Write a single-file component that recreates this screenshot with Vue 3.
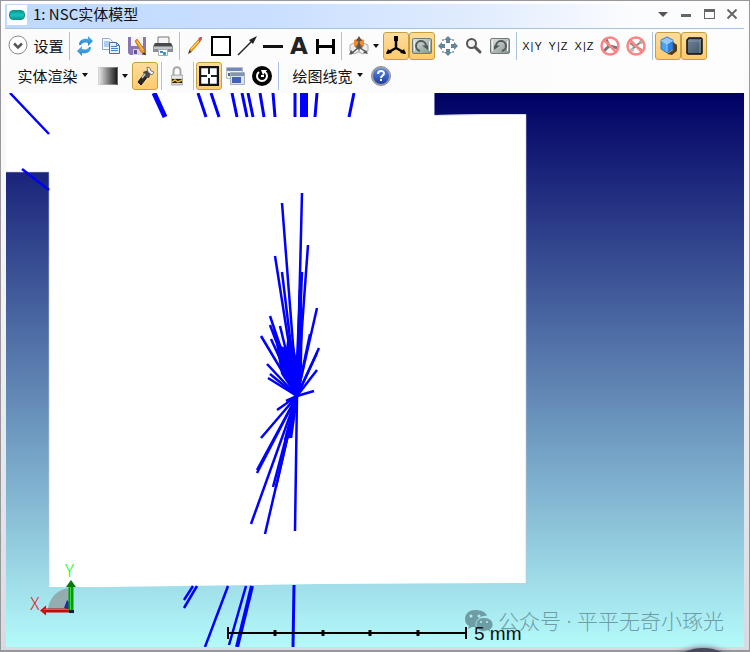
<script setup>
const fileTools = [
  { icon: 'refresh', label: 'Refresh' },
  { icon: 'copy', label: 'Copy' },
  { icon: 'save', label: 'Save' },
  { icon: 'print', label: 'Print' },
]
const drawTools = [
  { icon: 'pencil', label: 'Pencil' },
  { icon: 'rectangle', label: 'Rectangle' },
  { icon: 'arrow', label: 'Arrow' },
  { icon: 'line', label: 'Line' },
  { text: 'A', label: 'Text' },
  { icon: 'measure', label: 'Measure' },
]
const viewTools = [
  { icon: 'triad', label: 'Axes', active: true },
  { icon: 'rotate', label: 'Rotate', active: true },
  { icon: 'move', label: 'Pan' },
  { icon: 'zoom', label: 'Zoom' },
  { icon: 'reset', label: 'Reset view' },
]
const planeTools = [
  ['X', 'Y'],
  ['Y', 'Z'],
  ['X', 'Z'],
]

const topRays = [
  [10, 93, 49, 134, 2.5], [22, 169, 49, 190, 2.5], [154, 93, 165, 117, 5],
  [198, 93, 206, 117, 3], [211, 93, 219, 117, 3], [232, 93, 237, 117, 3],
  [242, 93, 247, 117, 3], [248, 93, 253, 117, 3], [260, 93, 264, 117, 3],
  [273, 93, 275, 117, 3], [295, 93, 295, 117, 3], [303, 93, 303, 117, 6],
  [307, 93, 307, 117, 2], [317, 93, 315, 117, 3], [354, 93, 349, 117, 3],
]
const bottomRays = [
  [193, 586, 184, 600, 2.5], [197, 586, 184, 608, 2.5], [228, 586, 205, 647, 2.5],
  [246, 586, 229, 645, 2.5], [252, 586, 237, 647, 4], [294, 585, 293, 647, 3],
]
const burst = [
  [302, 193], [282, 203], [308, 245], [275, 256], [282, 272], [302, 272],
  [300, 290], [317, 308], [270, 316], [270, 325], [273, 330], [280, 326],
  [261, 336], [271, 339], [310, 334], [319, 348], [317, 353], [267, 364],
  [317, 370], [270, 374], [268, 378], [314, 391], [286, 401], [277, 410],
  [261, 438], [257, 470], [257, 473], [251, 524], [265, 534], [295, 531],
  [273, 487], [276, 487], [289, 438], [291, 438], [285, 440],
]
const ticks = [275, 323, 370, 418]
</script>

<template>
  <main class="window">
    <svg class="sprite" aria-hidden="true">
      <defs>
        <linearGradient id="gBlue" x1="0" y1="0" x2="0" y2="1"><stop offset="0" stop-color="#55b4ea" /><stop offset="1" stop-color="#2583cf" /></linearGradient>
        <linearGradient id="gShade"><stop offset="0" stop-color="#f0f0f0" /><stop offset="1" stop-color="#111" /></linearGradient>
        <linearGradient id="gMetal" x1="0" y1="0" x2="1" y2="1"><stop offset="0" stop-color="#dfe4e2" /><stop offset="1" stop-color="#87918f" /></linearGradient>
        <linearGradient id="gHelp" x1="0" y1="0" x2="0" y2="1"><stop offset="0" stop-color="#5e8be4" /><stop offset="1" stop-color="#1a3ea6" /></linearGradient>
        <linearGradient id="gSlate" x1="0" y1="0" x2="1" y2="1"><stop offset="0" stop-color="#71869b" /><stop offset="1" stop-color="#425568" /></linearGradient>
      </defs>
      <symbol id="expand" viewBox="0 0 20 20">
        <circle cx="10" cy="10" r="9" fill="#fff" stroke="#888" />
        <path d="M6 8.500l4 4 4-4" fill="none" stroke="#555" stroke-width="2.500" />
      </symbol>
      <symbol id="refresh" viewBox="0 0 20 20">
        <path d="M4 9C4 4 8 2 13 3V0l5 5-5 5V7C9 6 7 7 6 9z" fill="url(#gBlue)" />
        <path d="M16 11c0 5-4 7-9 6v3l-5-5 5-5v3c4 1 6 0 7-2z" fill="url(#gBlue)" />
      </symbol>
      <symbol id="copy" viewBox="0 0 20 20">
        <path d="M1.500 2.500h7l3 3v8h-10z" fill="#f4f8fd" stroke="#8fa8cc" />
        <path d="M3 6h6M3 8h6M3 10h6" stroke="#6aa0e0" />
        <path d="M8.500 6.500h7l3 3v8h-10z" fill="#e6f0fc" stroke="#496da6" />
        <path d="M15.500 6.500v3h3M10 10.500h6M10 12.500h7M10 14.500h7" fill="none" stroke="#4584d3" />
      </symbol>
      <symbol id="save" viewBox="0 0 20 20">
        <path d="M1 1h18v18H3l-2-2z" fill="#8c75b3" />
        <path d="M4 1h12v9H4z" fill="#f3f2f8" />
        <path d="M6 13h9v6H6z" fill="#d6d1e4" /><path d="M7 14h3v4H7z" fill="#68528d" />
        <path d="M8 5l2-2 7 10 2 6-5-3z" fill="#f4951e" stroke="#b96b16" stroke-width=".7" />
        <path d="M10 5l6 9" stroke="#ffd06b" /><path d="M17 16l2 3-3-1z" fill="#222" />
      </symbol>
      <symbol id="print" viewBox="0 0 20 20">
        <path d="M5 1h11v7H5z" fill="#f4f5f6" stroke="#777" />
        <path d="M2 7h16l2 3v6H0v-6z" fill="#8b9094" /><path d="M2 7h16l1 3H1z" fill="#44484c" />
        <path d="M1 11h18v2H1z" fill="#c1c5c8" />
        <path d="M5.500 13.500h9v6h-9z" fill="#fff" stroke="#aab" /><path d="M7 15h3v2H7z" fill="#3d8cca" /><path d="M10 16h3v3h-3z" fill="#31a4d0" />
      </symbol>
      <symbol id="pencil" viewBox="0 0 20 20">
        <path d="M4 17l1-4 8-9 2 2-8 9z" fill="#f5a51d" stroke="#b87318" stroke-width=".7" />
        <path d="M6 13l8-8" stroke="#ffdb70" /><path d="M13 3l2-2h2v2l-2 3z" fill="#d84b48" />
        <path d="M3 18l1.500-4 2 2z" fill="#3a3430" />
      </symbol>
      <symbol id="rectangle" viewBox="0 0 20 20"><path d="M1 1h18v18H1z" fill="#fff" stroke="#000" stroke-width="2" /></symbol>
      <symbol id="arrow" viewBox="0 0 20 20">
        <path d="M1 19L15 5" stroke="#222" stroke-width="1.500" /><path d="M20 0l-4 8-4-4z" fill="#222" />
      </symbol>
      <symbol id="line" viewBox="0 0 20 20"><path d="M0 9h20v3H0z" fill="#111" /></symbol>
      <symbol id="measure" viewBox="0 0 20 20">
        <path d="M1 3h3v15H1zM17 3h3v15h-3zM4 9h13v3H4z" fill="#000" />
      </symbol>
      <symbol id="axes" viewBox="0 0 20 20">
        <path d="M1 9l4-2 5 3v6l-5 2-4-3zM10 10l4-3 5 2v6l-5 3-4-2z" fill="#eee" stroke="#aaa" />
        <path d="M5 4l5-2 5 2v6l-5 3-5-3z" fill="#f08b28" />
        <path d="M10 11V3M10 11l7 5M10 11l-8 7" stroke="#555" stroke-width="1.500" />
        <path d="M10 0l3 5H7zM0 19l2-5 3 3zM19 18l-5-1 3-3z" fill="#555" />
        <path d="M10 7l4 4-4 3-4-3z" fill="#44505a" opacity=".7" />
      </symbol>
      <symbol id="triad" viewBox="0 0 20 20">
        <path d="M10 12V1M10 12L1 17M10 12l9 5" stroke="#000" stroke-width="2.500" />
        <path d="M8 0h4v5H8zM0 18l2-5 4 4zM20 18l-2-5-4 4z" fill="#000" />
      </symbol>
      <symbol id="rotate" viewBox="0 0 20 20">
        <rect x=".5" y="2.500" width="19" height="15" rx="1.500" fill="url(#gMetal)" stroke="#727c7b" />
        <path d="M2 5h1v10H2zM17 5h1v10h-1z" fill="#f1f3f0" />
        <path d="M8 15A5 5 0 1 1 14 10" fill="none" stroke="#4f5b5b" stroke-width="2" /><path d="M10 9.500h6V14z" fill="#4f5b5b" />
      </symbol>
      <symbol id="reset" viewBox="0 0 20 20">
        <rect x=".5" y="2.500" width="19" height="15" rx="1.500" fill="url(#gMetal)" stroke="#727c7b" />
        <path d="M2 5h1v10H2zM17 5h1v10h-1z" fill="#f1f3f0" />
        <path d="M12 15A5 5 0 1 0 6 10" fill="none" stroke="#4f5b5b" stroke-width="2" /><path d="M10 9.500H4V14z" fill="#4f5b5b" />
      </symbol>
      <symbol id="move" viewBox="0 0 20 20">
        <path d="M10 0l4 4h-2v3H8V4H6zM10 20l4-4h-2v-3H8v3H6zM0 10l4-4v2h3v4H4v2zM20 10l-4-4v2h-3v4h3v2z" fill="#66849a" />
        <path d="M4 4h2M14 4h2M4 16h2M14 16h2" stroke="#9db0bd" stroke-width="2" />
      </symbol>
      <symbol id="zoom" viewBox="0 0 20 20">
        <circle cx="7.500" cy="7.500" r="4.500" fill="#f2f2f2" stroke="#555" stroke-width="2" />
        <path d="M11 11l5 5" stroke="#555" stroke-width="3" stroke-linecap="round" />
      </symbol>
      <symbol id="noAxes" viewBox="0 0 20 20">
        <path d="M9 10L6 3M9 10l-5 5M9 10l9 2" stroke="#777" stroke-width="3" />
        <circle cx="10" cy="10" r="8.500" fill="none" stroke="#fa8585" stroke-width="2.500" /><path d="M4 4l12 12" stroke="#fa8585" stroke-width="2.500" />
      </symbol>
      <symbol id="noRays" viewBox="0 0 20 20">
        <path d="M5 14l11-9M4 7l4 3M11 11l5 3" stroke="#888" stroke-width="2" /><circle cx="6" cy="14" r="2" fill="#bbb" /><circle cx="15" cy="6" r="2" fill="#aaa" />
        <circle cx="10" cy="10" r="8.500" fill="none" stroke="#fa8585" stroke-width="2.500" /><path d="M4 4l12 12" stroke="#fa8585" stroke-width="2.500" />
      </symbol>
      <symbol id="cube" viewBox="0 0 20 20">
        <path d="M9 18l6-4V6l4 3v6l-5 4z" fill="#3c2c18" opacity=".9" />
        <path d="M9 1l6 3-6 4-6-4z" fill="#8ccbff" /><path d="M3 4l6 4v9l-6-4z" fill="#4ba1f5" /><path d="M15 4l-6 4v9l6-4z" fill="#2f80de" />
        <path d="M9 1l6 3v9l-6 4-6-4V4z" fill="none" stroke="#1c62ba" stroke-width=".8" /><path d="M3 4.500L9 8l6-3.500M9 8v8" fill="none" stroke="#a9d9ff" stroke-width=".8" />
      </symbol>
      <symbol id="solid" viewBox="0 0 20 20">
        <path d="M5 2h12l1 1v14l-1 1H4l-1-1V4z" fill="url(#gSlate)" stroke="#0b0d0f" stroke-width="1.500" />
        <path d="M4 5h12v12M16 5l1-2" fill="none" stroke="#95a8ba" stroke-width=".7" />
      </symbol>
      <symbol id="shade" viewBox="0 0 20 20"><path d="M0 1h20v18H0z" fill="url(#gShade)" /><path d="M.5 1.500h19v17H.5z" fill="none" stroke="#bbb" stroke-opacity=".5" /></symbol>
      <symbol id="torch" viewBox="0 0 20 20">
        <path d="M10 7l3 3-7 9-3-3z" fill="#2b2825" stroke="#111" /><path d="M8 6l5-2 3 3-2 5-4-1z" fill="#4a4a4a" />
        <path d="M12 1l3 1 1 3 3 1-2 3-4-3z" fill="#f2f5f8" stroke="#555" stroke-width=".7" /><path d="M7 12l3-4" stroke="#ccc" stroke-width="1.500" />
      </symbol>
      <symbol id="lock" viewBox="0 0 20 20">
        <path d="M6.500 10V5c0-5 7-5 7 0v5" fill="none" stroke="#aaa" stroke-width="2" />
        <path d="M4.500 9h11v10h-11z" fill="#d3d3d3" stroke="#999" stroke-width=".7" /><path d="M5 13h10v4H5z" fill="#27231d" /><path d="M5 16l3-2 3 2 4-2" fill="none" stroke="#e4bd32" stroke-width="1.500" /><path d="M5 11h10" stroke="#f9f9f9" />
      </symbol>
      <symbol id="fit" viewBox="0 0 20 20">
        <path d="M1 1h18v18H1z" fill="#fff" stroke="#111" stroke-width="2.500" />
        <path d="M10 2v6M10 12v6M2 10h6M12 10h6" stroke="#222" stroke-width="2" />
      </symbol>
      <symbol id="windows" viewBox="0 0 20 20">
        <path d="M.5 1.500h16v11H.5z" fill="#eef1f6" stroke="#b5bdc8" /><path d="M1 2h15v3H1z" fill="#7187bd" /><path d="M2 7h5v3H2z" fill="#4763ae" />
        <path d="M4.500 6.500h14v12h-14z" fill="#dfe2e7" stroke="#a5adb8" /><path d="M5 7h13v3H5z" fill="#8293b8" /><path d="M6 11h9v6H6z" fill="#4160b7" />
      </symbol>
      <symbol id="cycle" viewBox="0 0 20 20">
        <circle cx="10" cy="10" r="10" fill="#050505" />
        <path d="M7 6a5 5 0 1 0 6 0" fill="none" stroke="#fff" stroke-width="2" /><path d="M9 4h6l-4 5zM9 9h3v2H9z" fill="#fff" />
      </symbol>
      <symbol id="help" viewBox="0 0 20 20">
        <circle cx="10" cy="10" r="9.500" fill="#aaa" stroke="#8a8a8a" /><circle cx="10" cy="10" r="8" fill="url(#gHelp)" />
        <path d="M7 8c0-4 6-4 6-.5 0 2-3 2-3 4.500" fill="none" stroke="#fff" stroke-width="2" /><path d="M9 13h2v2H9z" fill="#fff" />
      </symbol>
    </svg>

    <header class="titlebar">
      <span class="app-icon"><i></i></span>
      <h1>1: NSC实体模型</h1>
      <div class="controls">
        <button aria-label="Menu"><svg viewBox="0 0 12 12"><path d="M1 3h10L6 8z" fill="#555" /></svg></button>
        <button aria-label="Minimize"><svg viewBox="0 0 12 12"><path d="M1 5h10v3H1z" fill="#666" /></svg></button>
        <button aria-label="Maximize"><svg viewBox="0 0 12 12"><path d="M1 0h11v10H1zM2 3v6h9V3z" fill="#666" fill-rule="evenodd" /></svg></button>
        <button aria-label="Close"><svg viewBox="0 0 12 12"><path d="M1.500 .5l9 9M10.500 .5l-9 9" stroke="#666" stroke-width="2" /></svg></button>
      </div>
    </header>

    <nav class="toolbar">
      <div class="row">
        <button class="settings"><svg class="icon"><use href="#expand" /></svg>设置</button>
        <span class="sep"></span>
        <button v-for="t in fileTools" :key="t.label" class="tool" :aria-label="t.label"><svg class="icon"><use :href="'#' + t.icon" /></svg></button>
        <span class="sep"></span>
        <button v-for="t in drawTools" :key="t.label" class="tool" :aria-label="t.label">
          <svg v-if="t.icon" class="icon"><use :href="'#' + t.icon" /></svg>
          <span v-else class="letter">{{ t.text }}</span>
        </button>
        <span class="sep"></span>
        <button class="drop" aria-label="View orientation"><svg class="icon"><use href="#axes" /></svg><i class="caret"></i></button>
        <button v-for="t in viewTools" :key="t.label" class="tool" :class="{ active: t.active }" :aria-label="t.label"><svg class="icon"><use :href="'#' + t.icon" /></svg></button>
        <span class="sep"></span>
        <button v-for="p in planeTools" :key="p.join('')" class="tool plane"><span>{{ p[0] }}</span><span>|</span><span>{{ p[1] }}</span></button>
        <button class="tool" aria-label="Hide axes"><svg class="icon"><use href="#noAxes" /></svg></button>
        <button class="tool" aria-label="Hide rays"><svg class="icon"><use href="#noRays" /></svg></button>
        <span class="sep"></span>
        <button class="tool active" aria-label="Perspective"><svg class="icon"><use href="#cube" /></svg></button>
        <button class="tool active" aria-label="Solid"><svg class="icon"><use href="#solid" /></svg></button>
      </div>
      <div class="row">
        <button class="menu">实体渲染<i class="caret"></i></button>
        <button class="drop" aria-label="Background"><svg class="icon"><use href="#shade" /></svg><i class="caret"></i></button>
        <button class="tool active" aria-label="Lighting"><svg class="icon"><use href="#torch" /></svg></button>
        <span class="sep"></span>
        <button class="tool" aria-label="Lock"><svg class="icon"><use href="#lock" /></svg></button>
        <span class="sep"></span>
        <button class="tool active" aria-label="Fit"><svg class="icon"><use href="#fit" /></svg></button>
        <button class="tool wide" aria-label="Windows"><svg class="icon"><use href="#windows" /></svg></button>
        <button class="tool" aria-label="Reset"><svg class="icon"><use href="#cycle" /></svg></button>
        <span class="sep"></span>
        <button class="menu">绘图线宽<i class="caret"></i></button>
        <button class="tool" aria-label="Help"><svg class="icon"><use href="#help" /></svg></button>
      </div>
    </nav>

    <section class="viewport">
      <svg class="scene" viewBox="6 93 738 554" preserveAspectRatio="xMinYMin slice">
        <path d="M6 92h428v23l50-1h42v469l-206 1-214 3H49V172H5V92z" fill="#fff" />
        <path d="M434.500 93v22.500l50-1h41.500v468.500M49 586V172H6" fill="none" stroke="#c3c6e6" stroke-opacity=".6" />
        <g stroke="#0000ff">
          <line v-for="(r, i) in topRays" :key="'t' + i" :x1="r[0]" :y1="r[1]" :x2="r[2]" :y2="r[3]" :stroke-width="r[4]" />
          <line v-for="(r, i) in bottomRays" :key="'b' + i" :x1="r[0]" :y1="r[1]" :x2="r[2]" :y2="r[3]" :stroke-width="r[4]" />
          <g stroke-width="2.500">
            <line v-for="(r, i) in burst" :key="'c' + i" x1="297" y1="396" :x2="r[0]" :y2="r[1]" />
          </g>
        </g>
        <path d="M297 398l-16-24-5-30 10 4 2-14 6 12 2 10 3-70 4 28-1 54z" fill="#0000ff" />

        <g>
          <path d="M71 611H48a23 23 0 0 1 23-23z" fill="#8e9b9b" fill-opacity=".75" />
          <path d="M64 608l3-8 3 3v7z" fill="#1c2fa5" />
          <path d="M43 608.500h28v4H43z" fill="#c40808" /><path d="M40 610.500l6-5v10z" fill="#d01010" /><path d="M44 609.500h27" stroke="#f05050" />
          <path d="M68.500 586h5v26h-5z" fill="#079a07" /><path d="M70.500 586v24" stroke="#30e030" /><path d="M71 580l5 7H66z" fill="#057805" />
          <path d="M69 610h5v3h-5z" fill="#101c50" />
          <text class="axis" x="30" y="610" fill="#ed2020">X</text>
          <text class="axis" x="65" y="577" fill="#16f016">Y</text>
        </g>

        <g fill="#6f9da5">
          <path d="M475 610c-6 0-10 4-10 9 0 3 1 5 4 7l-1 3 4-2h5c-2-7 4-12 10-11-1-4-6-6-12-6z" />
          <path d="M484 617.500c-5 0-8 3-8 7s3 7 8 7l4-1 3 2-1-3c2-1 3-3 3-5 0-4-4-7-9-7z" stroke="#b0eef2" stroke-width=".8" />
          <g fill="#b9ebed"><circle cx="471" cy="616" r="1.500" /><circle cx="479" cy="616" r="1.500" /><circle cx="481" cy="622" r="1" /><circle cx="487" cy="622" r="1" /></g>
        </g>
        <text class="watermark" x="498" y="629">公众号 · 平平无奇小琢光</text>

        <g stroke="#000" stroke-width="2">
          <path d="M227 633h240M228 627v12M466 627v12" />
          <path v-for="x in ticks" :key="x" :d="`M${x} 630v6`" stroke-width="3" />
        </g>
        <text class="scale" x="474" y="640">5 mm</text>
      </svg>
    </section>
    <span class="orb"></span>
  </main>
</template>

<style>
body {
  margin: 0;
}
</style>

<style scoped>
* {
  box-sizing: border-box;
}
.window {
  position: relative;
  display: flex;
  flex-direction: column;
  height: 100vh;
  padding: 4px 6px 5px 5px;
  overflow: hidden;
  background: linear-gradient(#fdfdfd, #f3f3f5 45%, #d8dae1);
  box-shadow: inset 0 0 0 1px #98989c, inset 0 -2px #98989c;
  font-family: "Noto Sans CJK SC", sans-serif;
  font-size: 15px;
  color: #111;
}
.sprite {
  position: absolute;
  width: 0;
  height: 0;
}
.titlebar {
  display: flex;
  flex: none;
  align-items: center;
  height: 25px;
  padding-bottom: 2px;
  background: linear-gradient(90deg, #bfd9ff, #c9dfff 35%, #e2edfd 65%, #fbfcfe 85%, #fdfdfd);
  border-bottom: 1px solid #a9c3de;
}
.app-icon {
  display: grid;
  place-items: center;
  width: 20px;
  height: 20px;
  margin: 0 6px 0 2px;
  background: #fff;
}
.app-icon i {
  width: 16px;
  height: 10px;
  background: linear-gradient(#0b9c98, #14c4bd, #0b9c98);
  border: 1px solid #0a9290;
  border-radius: 4px;
}
h1 {
  flex: 1;
  margin: 0;
  padding-bottom: 2px;
  font-size: 15px;
  font-weight: 400;
  line-height: 20px;
}
.controls {
  display: flex;
  gap: 11px;
  padding-right: 6px;
}
button {
  display: flex;
  flex: none;
  align-items: center;
  justify-content: center;
  padding: 0;
  color: inherit;
  font: inherit;
  background: none;
  border: 0;
}
.controls svg {
  width: 12px;
  height: 12px;
}
.toolbar {
  display: flex;
  flex: none;
  flex-direction: column;
  gap: 2px;
  padding: 3px 0 3px 1px;
  background: linear-gradient(90deg, #fbfbfc, #fdfdfd);
}
.row {
  display: flex;
  height: 28px;
}
.icon {
  flex: none;
  width: 20px;
  height: 20px;
}
.settings,
.menu {
  padding-bottom: 2px;
}
.settings {
  gap: 5px;
  width: 60px;
}
.sep {
  flex: none;
  width: 6px;
  background: linear-gradient(#a9c3de, #a9c3de) center / 1px 100% no-repeat;
}
.tool {
  width: 26px;
  height: 28px;
}
.tool.wide {
  width: 27px;
}
.active {
  background: linear-gradient(#fddc9d, #ffca6d);
  border: 1px solid #c6a03f;
  border-radius: 3px;
}
.letter {
  font-family: "DejaVu Sans", sans-serif;
  font-size: 23px;
  font-weight: 700;
  line-height: 28px;
  color: #222;
}
.plane {
  gap: 1px;
  font-family: "Liberation Sans", sans-serif;
  font-size: 11px;
}
.drop {
  gap: 4px;
  width: 39px;
}
.menu {
  gap: 4px;
  width: 87px;
  padding-left: 6px;
}
.caret {
  border: 3px solid transparent;
  border-top: 4px solid #111;
  border-bottom: 0;
}
.viewport {
  flex: 1;
  min-height: 0;
  margin-left: 1px;
  background: linear-gradient(#000064, #b4fafa);
}
.scene {
  display: block;
  width: 100%;
  height: 100%;
}
.axis {
  font-size: 18px;
  font-weight: 300;
}
.scale {
  font-family: "Liberation Sans", sans-serif;
  font-size: 19px;
  fill: #111;
}
.watermark {
  font-family: "Noto Sans", "Noto Sans CJK SC", sans-serif;
  font-size: 21px;
  font-weight: 300;
  fill: #6f9da5;
}
.orb {
  position: absolute;
  right: 2px;
  bottom: -86px;
  width: 90px;
  height: 90px;
  background: #454b5b;
  border-radius: 50%;
  box-shadow: 0 0 6px #667;
}
</style>
